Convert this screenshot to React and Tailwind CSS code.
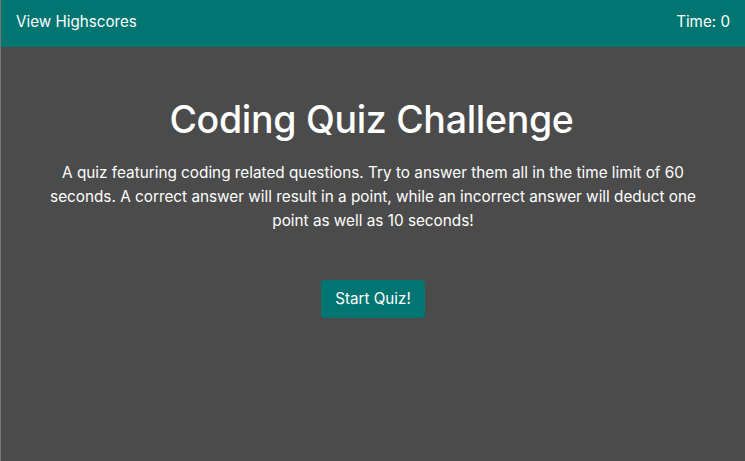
import React from 'react';

const App = () => {
  return (
    <div className="min-h-screen h-[461px] bg-[#4b4b4b] border-l border-[#777] text-white font-['Inter','Noto_Sans',sans-serif] flex flex-col">
      {/* Header */}
      <div className="h-[47px] bg-[#007571] flex justify-between items-center px-[15px] pb-[2px] text-[15.2px]">
        <span>View Highscores</span>
        <span>Time: 0</span>
      </div>

      {/* Start screen */}
      <div className="flex flex-col items-center text-center px-[40px] pt-[49px]">
        <h1 className="text-[37.5px] font-medium leading-[48px] tracking-[-0.3px] -ml-[3px]">Coding Quiz Challenge</h1>
        <p className="mt-[17px] text-[15.3px] leading-[24px] max-w-[656px]">
          A quiz featuring coding related questions. Try to answer them all in the time limit of 60 seconds. A correct answer will result in a point, while an incorrect answer will deduct one point as well as 10 seconds!
        </p>
        <button className="mt-[47px] bg-[#007571] rounded-[4px] px-[14px] h-[38px] text-[15.2px] text-white">
          Start Quiz!
        </button>
      </div>
    </div>
  );
};

export default App;
